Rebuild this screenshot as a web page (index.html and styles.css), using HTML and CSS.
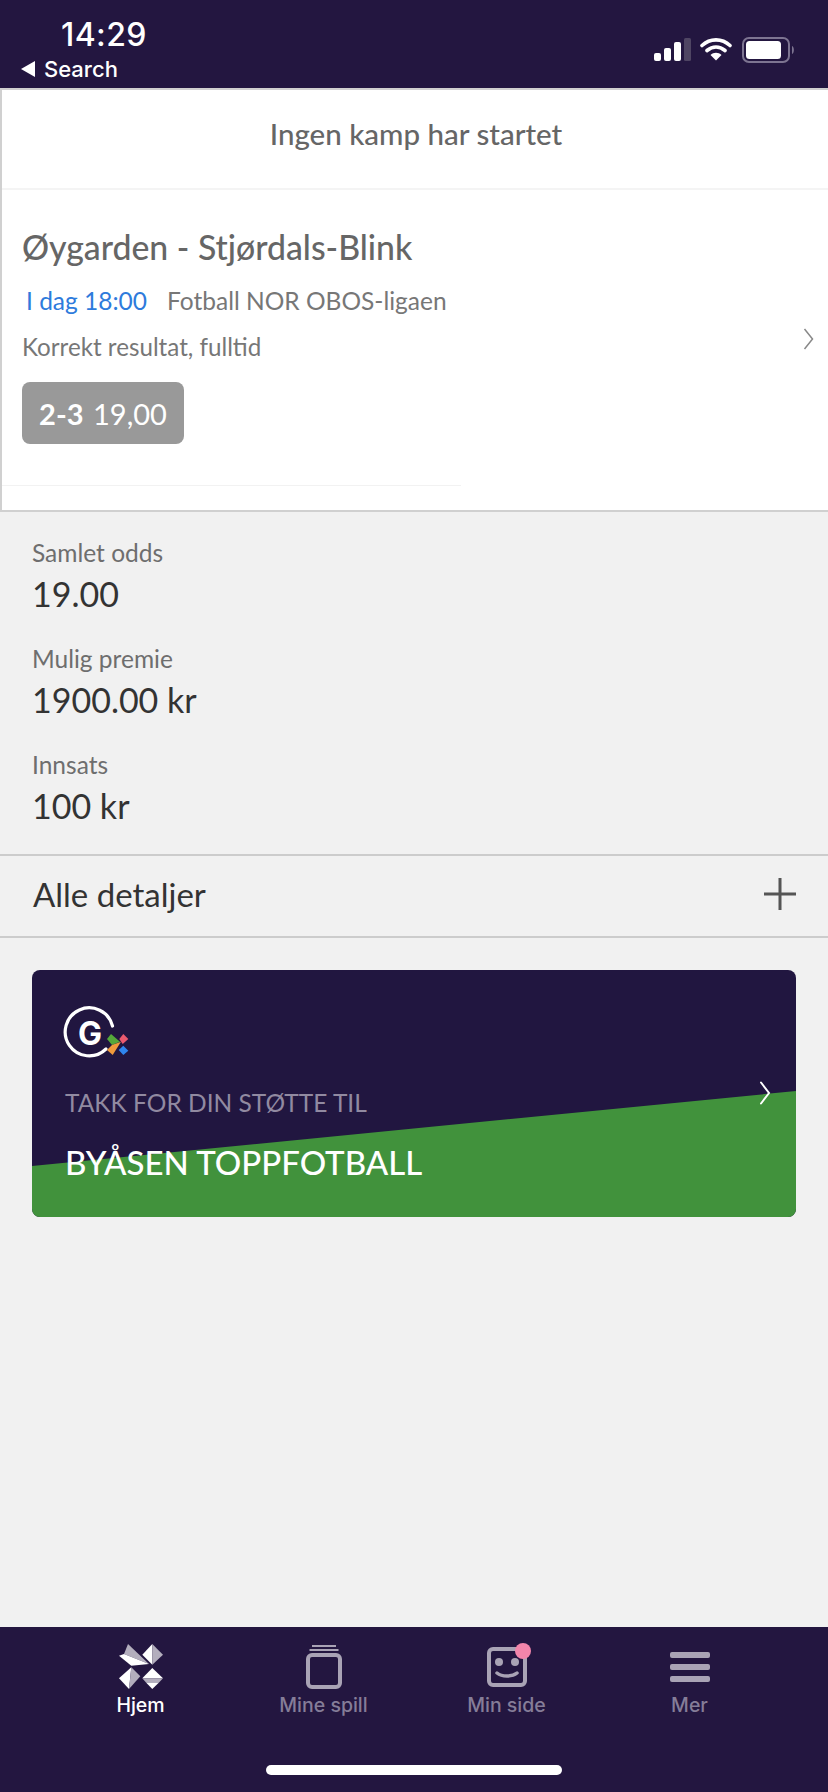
FILE: index.html
```html
<!DOCTYPE html>
<html lang="no">
<head>
<meta charset="utf-8">
<title>Ingen kamp har startet</title>
<link rel="stylesheet" href="styles.css">
</head>
<body>
<div class="app">
  <header class="statusbar">
    <div class="status-left">
      <div class="time">14:29</div>
      <div class="back"><span class="back-tri"></span><span>Search</span></div>
    </div>
    <div class="status-right">
      <svg class="sig" width="37" height="24" viewBox="0 0 37 24"><rect x="0" y="15" width="7" height="8" rx="2" fill="#fff"/><rect x="10" y="10" width="7" height="13" rx="2" fill="#fff"/><rect x="20" y="4" width="7" height="19" rx="2" fill="#fff"/><rect x="30" y="0" width="7" height="23" rx="1.5" fill="#4f4563"/></svg>
      <svg class="wifi" width="32" height="24" viewBox="0 0 32 24"><path d="M2 8.500C10 1 22 1 30 8.500M7 13.500C12.500 9 19.500 9 25 13.500" fill="none" stroke="#fff" stroke-width="3.600" stroke-linecap="round"/><path d="M10.500 18C13.500 15 18.500 15 21.500 18L16 23.500Z" fill="#fff"/></svg>
      <svg class="batt" width="54" height="26" viewBox="0 0 54 26"><rect x="1" y="1" width="46" height="24" rx="6" fill="none" stroke="#7d7491" stroke-width="2"/><rect x="4" y="4" width="35" height="18" rx="3.500" fill="#fff"/><path d="M50 9C52.500 10 52.500 16 50 17Z" fill="#7d7491"/></svg>
    </div>
  </header>

  <main class="content">
    <section class="card">
      <div class="card-head">Ingen kamp har startet</div>
      <div class="bet">
        <div class="bet-main">
          <h1 class="match">Øygarden - Stjørdals-Blink</h1>
          <div class="meta"><span class="when">I dag 18:00</span><span class="league">Fotball NOR OBOS-ligaen</span></div>
          <div class="market">Korrekt resultat, fulltid</div>
          <div class="pick"><b>2-3</b> 19,00</div>
        </div>
        <svg class="bet-chevron" width="11" height="22" viewBox="0 0 11 22"><path d="M1.500 1L9.500 11L1.500 21" fill="none" stroke="#888" stroke-width="1.500"/></svg>
      </div>
    </section>

    <section class="summary">
      <div class="stat"><div class="stat-label">Samlet odds</div><div class="stat-value">19.00</div></div>
      <div class="stat"><div class="stat-label">Mulig premie</div><div class="stat-value">1900.00 kr</div></div>
      <div class="stat"><div class="stat-label">Innsats</div><div class="stat-value">100 kr</div></div>
    </section>

    <section class="details">
      <span>Alle detaljer</span>
      <svg width="32" height="32" viewBox="0 0 32 32"><path d="M0 16H32M16 0V32" stroke="#555" stroke-width="3"/></svg>
    </section>

    <section class="banner">
      <svg class="banner-bg" viewBox="0 0 764 247" preserveAspectRatio="none"><polygon points="0,196 764,121 764,247 0,247" fill="#41923c"/></svg>
      <svg class="logo" width="66" height="52" viewBox="0 0 66 52">
        <path d="M47.500 20A24 24 0 1 0 41 43" fill="none" stroke="#fff" stroke-width="3.200" stroke-linecap="round"/>
        <text x="13" y="39" class="logo-g">G</text>
        <polygon points="42,33 46,28 55,35.700 47,39" fill="#55a83a"/>
        <polygon points="42,44 47,39 56,35.700 47.700,49" fill="#f09a3c"/>
        <polygon points="54.300,33 58.300,28 63.300,33 57.700,38" fill="#ea5a6e"/>
        <polygon points="53.700,44 58.300,39.700 63.300,44.700 58.300,49" fill="#2f86ee"/>
      </svg>
      <div class="thanks">TAKK FOR DIN STØTTE TIL</div>
      <div class="club">BYÅSEN TOPPFOTBALL</div>
      <svg class="banner-chevron" width="12" height="24" viewBox="0 0 12 24"><path d="M2 1.500L10 12L2 22.500" fill="none" stroke="#fff" stroke-width="2" stroke-linecap="round"/></svg>
    </section>
  </main>

  <nav class="tabbar">
    <div class="tabs">
      <div class="tab active">
        <div class="tab-icon">
          <svg width="44" height="45" viewBox="0 0 44 45">
            <polygon points="9,0 30,20 5,10" fill="#b3aebd"/>
            <polygon points="0,11.700 5,10 30,20 12.300,21.700" fill="#fff"/>
            <polygon points="23.300,10.700 33.300,0 33.300,20.700" fill="#fff"/>
            <polygon points="33.300,0 44,10.700 33.300,20.700" fill="#b3aebd"/>
            <polygon points="0,34.300 12.300,23.300 10,45" fill="#fff"/>
            <polygon points="12.300,23.300 21.300,32.300 10,45" fill="#b3aebd"/>
            <polygon points="23.300,34.300 33.300,24 44,34.300" fill="#fff"/>
            <polygon points="23.300,34.300 44,34.300 40,38.500 27,38.500" fill="#b3aebd"/>
            <polygon points="27,38.500 40,38.500 33.300,45" fill="#fff"/>
          </svg>
        </div>
        <span>Hjem</span>
      </div>
      <div class="tab">
        <div class="tab-icon">
          <svg width="36" height="44" viewBox="0 0 36 44">
            <path d="M6 1H30M3.500 5H32.500" stroke="#a9a3b5" stroke-width="2"/>
            <rect x="2" y="10" width="32" height="32" rx="4" fill="none" stroke="#a9a3b5" stroke-width="4"/>
          </svg>
        </div>
        <span>Mine spill</span>
      </div>
      <div class="tab">
        <div class="tab-icon">
          <div class="face">
            <svg width="40" height="40" viewBox="0 0 40 40">
              <rect x="2" y="2" width="36" height="36" rx="4" fill="none" stroke="#a9a3b5" stroke-width="4"/>
              <circle cx="12" cy="15" r="4" fill="#a9a3b5"/><circle cx="28" cy="15" r="4" fill="#a9a3b5"/>
              <path d="M10 26C15 30 25 30 30 26" fill="none" stroke="#a9a3b5" stroke-width="3.500" stroke-linecap="round"/>
            </svg>
            <span class="dot"></span>
          </div>
        </div>
        <span>Min side</span>
      </div>
      <div class="tab">
        <div class="tab-icon">
          <div class="burger"><i></i><i></i><i></i></div>
        </div>
        <span>Mer</span>
      </div>
    </div>
    <div class="home-indicator"></div>
  </nav>
</div>
</body>
</html>
```

FILE: styles.css
```css
* { box-sizing: border-box; }
html, body { margin: 0; padding: 0; }
body { font-family: "Lato", "Inter", sans-serif; background: #f1f1f1; }

.app { width: 828px; height: 1792px; display: flex; flex-direction: column; }

.statusbar {
  height: 88px; background: #231640; color: #fff;
  display: flex; justify-content: space-between; flex: none;
  font-family: "Inter", sans-serif;
}
.status-left { padding: 16px 0 0 21px; }
.time { font-size: 32px; line-height: 38px; font-weight: 500; margin-left: 40px; letter-spacing: .4px; }
.back { display: flex; align-items: center; gap: 9px; font-size: 22px; line-height: 28px; font-weight: 500; margin-top: 1px; }
.back-tri { width: 0; height: 0; border-style: solid; border-width: 8px 14px 8px 0; border-color: transparent #fff transparent transparent; }
.status-right { display: flex; align-items: flex-start; gap: 9px; padding: 38px 32px 0 0; }
.status-right svg { display: block; }
.wifi { margin-top: -1px; }
.batt { margin: -1px 0 0 1px; }

.content { flex: 1; min-height: 0; }

.card {
  background: #fff; border-top: 2px solid #d0d0d0; border-bottom: 2px solid #d0d0d0;
  border-left: 2px solid #d0d0d0;
}
.card-head {
  height: 100px; border-bottom: 2px solid #f4f4f4; padding-bottom: 12px; padding-left: 2px;
  display: flex; align-items: center; justify-content: center;
  font-size: 29.500px; font-weight: 500; color: #666;
}
.bet { display: flex; align-items: center; justify-content: space-between; padding-right: 14px; height: 320px; }
.bet-main { width: 459px; height: 100%; padding: 35px 0 0 20px; position: relative; }
.bet-main::after { content: ""; position: absolute; left: 0; right: 0; bottom: 24px; height: 1px; background: #f2f2f2; }
.match { margin: 0; font-size: 33.800px; line-height: 44px; font-weight: 500; color: #666; }
.meta { margin-top: 14px; font-size: 24.500px; line-height: 36px; color: #777; white-space: nowrap; padding-left: 4px; }
.when { color: #2e7bdc; margin-right: 20px; }
.market { margin-top: 10px; font-size: 24.200px; line-height: 36px; color: #777; }
.pick {
  margin-top: 17px; width: 162px; height: 62px; border-radius: 8px; background: #999; color: #fff;
  display: flex; align-items: center; justify-content: center; gap: 2px; font-size: 29px; white-space: pre;
}
.pick b { font-weight: 700; }
.bet-chevron { margin-top: -22px; }

.summary { padding: 23px 32px 0; height: 342px; }
.stat { height: 106px; }
.stat-label { font-size: 24.500px; line-height: 36px; color: #6e6e6e; }
.stat-value { font-size: 34px; line-height: 45px; color: #333; }

.details {
  height: 84px; border-top: 2px solid #ccc; border-bottom: 2px solid #ccc;
  display: flex; align-items: center; justify-content: space-between;
  padding: 0 32px 5px 33px; font-size: 33px; color: #333;
}

.banner {
  position: relative; margin: 32px 32px 0; height: 247px; border-radius: 8px; overflow: hidden;
  background: #211640; padding: 36px 0 0 33px;
}
.banner-bg { position: absolute; inset: 0; width: 100%; height: 100%; display: block; }
.logo { position: relative; display: block; overflow: visible; }
.logo-g { font-family: "Inter", sans-serif; font-weight: 700; font-size: 32px; fill: #fff; }
.thanks { position: relative; margin-top: 28px; font-size: 24.500px; line-height: 34px; color: #918aa1; }
.club { position: relative; margin-top: 20px; font-size: 33px; line-height: 44px; color: #fff; font-weight: 500; }
.banner-chevron { position: absolute; right: 25px; top: 111px; }

.tabbar { height: 165px; background: #231640; flex: none; padding-top: 15px; }
.tabs { display: flex; height: 123px; padding-left: 49px; }
.tab {
  width: 183px; display: flex; flex-direction: column; align-items: center;
  color: #857d98; font-family: "Inter", sans-serif; font-size: 19.500px; line-height: 28px; font-weight: 500;
}
.tab svg { display: block; }
.tab.active { color: #fff; }
.tab-icon { height: 49px; display: flex; align-items: center; justify-content: center; }
.face { position: relative; width: 40px; height: 40px; }
.dot { position: absolute; right: -4px; top: -4px; width: 16px; height: 16px; border-radius: 50%; background: #f285ab; }
.burger { width: 40px; display: flex; flex-direction: column; gap: 6px; }
.burger i { display: block; height: 6px; border-radius: 2px; background: #a9a3b5; }
.home-indicator { width: 296px; height: 10px; border-radius: 5px; background: #fff; margin: 0 auto; }
```
